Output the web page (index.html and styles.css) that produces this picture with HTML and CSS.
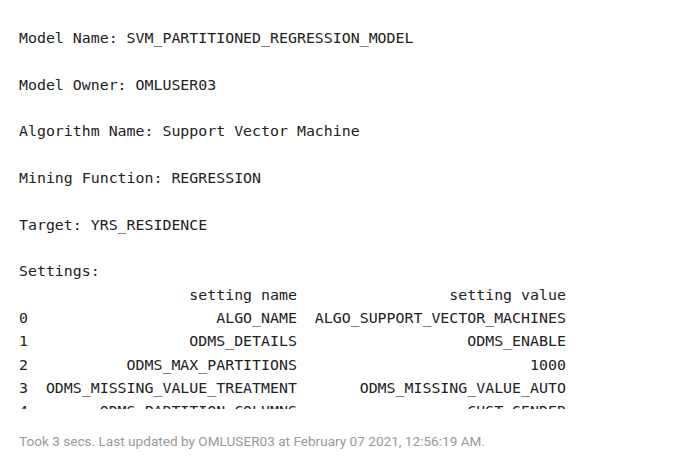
FILE: index.html
```html
<!DOCTYPE html>
<html lang="en">
<head>
    <meta charset="UTF-8">
    <title>Model details</title>
    <link rel="stylesheet" href="styles.css">
</head>
<body>
<div class="paragraph">
    <div class="result">
<pre class="result_text">Model Name: SVM_PARTITIONED_REGRESSION_MODEL

Model Owner: OMLUSER03

Algorithm Name: Support Vector Machine

Mining Function: REGRESSION

Target: YRS_RESIDENCE

Settings:
                   setting name                 setting value
0                     ALGO_NAME  ALGO_SUPPORT_VECTOR_MACHINES
1                  ODMS_DETAILS                   ODMS_ENABLE
2           ODMS_MAX_PARTITIONS                          1000
3  ODMS_MISSING_VALUE_TREATMENT       ODMS_MISSING_VALUE_AUTO
4        ODMS_PARTITION_COLUMNS                   CUST_GENDER
</pre>
    </div>
    <div class="footer">Took 3 secs. Last updated by OMLUSER03 at February 07 2021, 12:56:19 AM.</div>
</div>
</body>
</html>
```

FILE: styles.css
```css
body{
    margin: 0;
    background-color: white;
}
.paragraph{
    box-sizing: border-box;
    width: 100%;
    height: 457px;
}
.paragraph>.result{
    box-sizing: border-box;
    height: 409px;
    padding: 27px 0 0 19px;
    overflow: hidden;
}
.result>.result_text{
    margin: 0;
    font-family: "DejaVu Sans Mono", "Liberation Mono", monospace;
    font-size: 14.9px;
    line-height: 23.33px;
    color: #222;
}
.paragraph>.footer{
    padding: 24px 0 0 19px;
    font-family: Roboto, "Liberation Sans", sans-serif;
    font-size: 13.6px;
    color: #999;
}
```
